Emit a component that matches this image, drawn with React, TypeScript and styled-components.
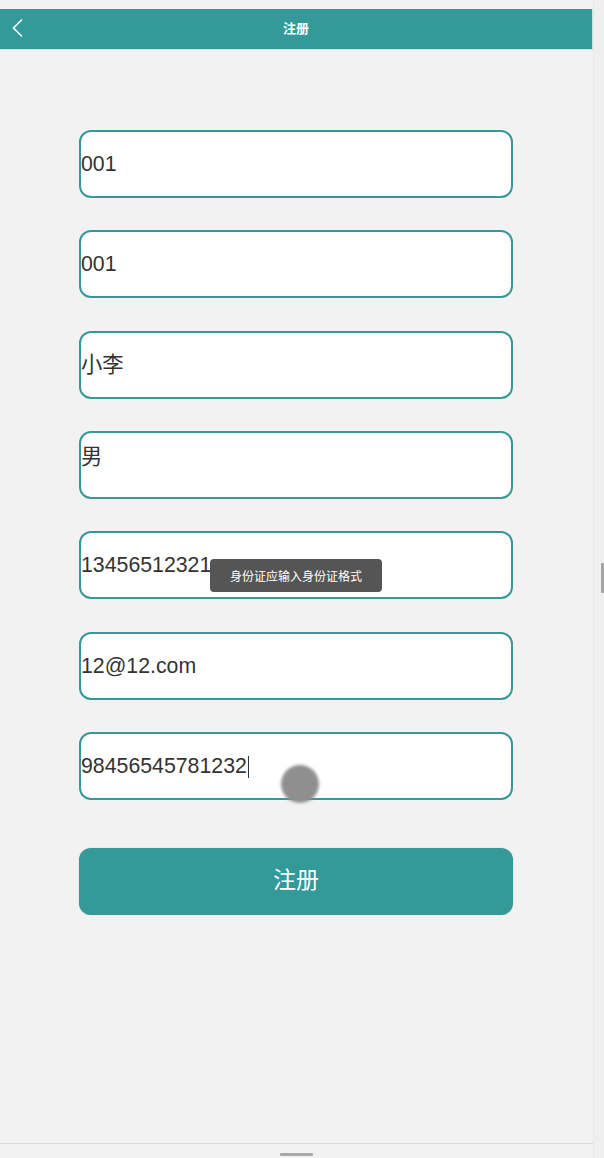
import styled, { createGlobalStyle } from 'styled-components';

const GlobalStyle = createGlobalStyle`
  html, body {
    margin: 0;
    padding: 0;
    background: #f2f2f2;
  }
  * {
    box-sizing: border-box;
  }
`;

const ScreenStyle = styled.div`
  display: flex;
  width: 604px;
  height: 1158px;
  overflow: hidden;
`;

const DeviceStyle = styled.div`
  position: relative;
  display: flex;
  flex-direction: column;
  width: 593px;
  height: 1158px;
  background: #f2f2f2;
  font-family: "Liberation Sans", "Noto Sans CJK SC", sans-serif;
`;

const ScrollTrackStyle = styled.div`
  position: relative;
  width: 11px;
  background: #efefef;
  border-left: 1px solid #e8e8e8;
`;

const ScrollThumbStyle = styled.div`
  position: absolute;
  top: 563px;
  right: 0;
  width: 3px;
  height: 30px;
  background: #a6a6a6;
  border-radius: 1px;
`;

const HeaderStyle = styled.header`
  position: relative;
  display: flex;
  align-items: center;
  justify-content: center;
  margin-top: 9px;
  height: 41px;
  background: #339999;
  border-bottom: 1px solid #cfe3e3;
  border-right: 1px solid #cfe3e3;
`;

const BackButtonStyle = styled.span`
  position: absolute;
  left: 12px;
  top: 9px;
  display: flex;
`;

const TitleStyle = styled.h1`
  margin: 0 0 2px;
  color: #ffffff;
  font-family: "Noto Sans CJK SC", sans-serif;
  font-size: 13px;
  line-height: 16px;
  font-weight: 700;
`;

const FormStyle = styled.div`
  display: flex;
  flex-direction: column;
  align-items: center;
  gap: 32.33px;
  padding: 80px 1px 0 0;
  flex: 1;
`;

const FieldStyle = styled.div<{ $top?: boolean }>`
  display: flex;
  align-items: ${(p) => (p.$top ? 'flex-start' : 'center')};
  padding-top: ${(p) => (p.$top ? '12px' : '0')};
  width: 434px;
  height: 68px;
  background: #ffffff;
  border: 2px solid #3a9797;
  border-radius: 12px;
  color: #333333;
  font-size: 21.3px;
  line-height: 24px;
`;

const CaretStyle = styled.span`
  display: inline-block;
  width: 1px;
  height: 22px;
  background: #333333;
  margin-left: 1px;
  vertical-align: middle;
`;

const SubmitStyle = styled.button`
  margin-top: 16px;
  width: 434px;
  height: 67px;
  padding: 0 0 8px;
  border: none;
  border-radius: 12px;
  background: #339999;
  color: #ffffff;
  font-family: "Noto Sans CJK SC", sans-serif;
  font-size: 23px;
  line-height: 28px;
  box-shadow: 0 0 1px rgba(0, 0, 0, 0.3);
`;

const ToastStyle = styled.div`
  position: absolute;
  left: 210px;
  top: 559px;
  width: 172px;
  height: 33px;
  display: flex;
  align-items: center;
  justify-content: center;
  background: #555555;
  border-radius: 4px;
  color: #ffffff;
  font-family: "Noto Sans CJK SC", sans-serif;
  font-size: 12px;
`;

const TouchDotStyle = styled.div`
  position: absolute;
  left: 281px;
  top: 765px;
  width: 38px;
  height: 38px;
  border-radius: 50%;
  background: #8f8f8f;
  filter: blur(1.5px);
`;

const BottomBarStyle = styled.div`
  display: flex;
  justify-content: center;
  height: 15px;
  border-top: 1px solid #dcdcdc;
  padding-top: 9px;
`;

const HandleStyle = styled.div`
  width: 33px;
  height: 3px;
  background: #a9a9a9;
  border-radius: 1px;
`;

const fields = [
  { value: '001' },
  { value: '001' },
  { value: '小李' },
  { value: '男', top: true },
  { value: '13456512321' },
  { value: '12@12.com' },
  { value: '98456545781232', caret: true },
];

const App = () => {
  return (
    <ScreenStyle>
      <GlobalStyle />
      <DeviceStyle>
        <HeaderStyle>
          <BackButtonStyle>
            <svg width="12" height="20" viewBox="0 0 12 20" fill="none">
              <path d="M10 1.5 L1.5 10 L10 18.5" stroke="#ffffff" strokeWidth="1.6" />
            </svg>
          </BackButtonStyle>
          <TitleStyle>注册</TitleStyle>
        </HeaderStyle>
        <FormStyle>
          {fields.map((field, index) => (
            <FieldStyle key={index} $top={field.top}>
              <span>
                {field.value}
                {field.caret && <CaretStyle />}
              </span>
            </FieldStyle>
          ))}
          <SubmitStyle type='button'>注册</SubmitStyle>
        </FormStyle>
        <BottomBarStyle>
          <HandleStyle />
        </BottomBarStyle>
        <ToastStyle>身份证应输入身份证格式</ToastStyle>
        <TouchDotStyle />
      </DeviceStyle>
      <ScrollTrackStyle>
        <ScrollThumbStyle />
      </ScrollTrackStyle>
    </ScreenStyle>
  );
};

export default App;
